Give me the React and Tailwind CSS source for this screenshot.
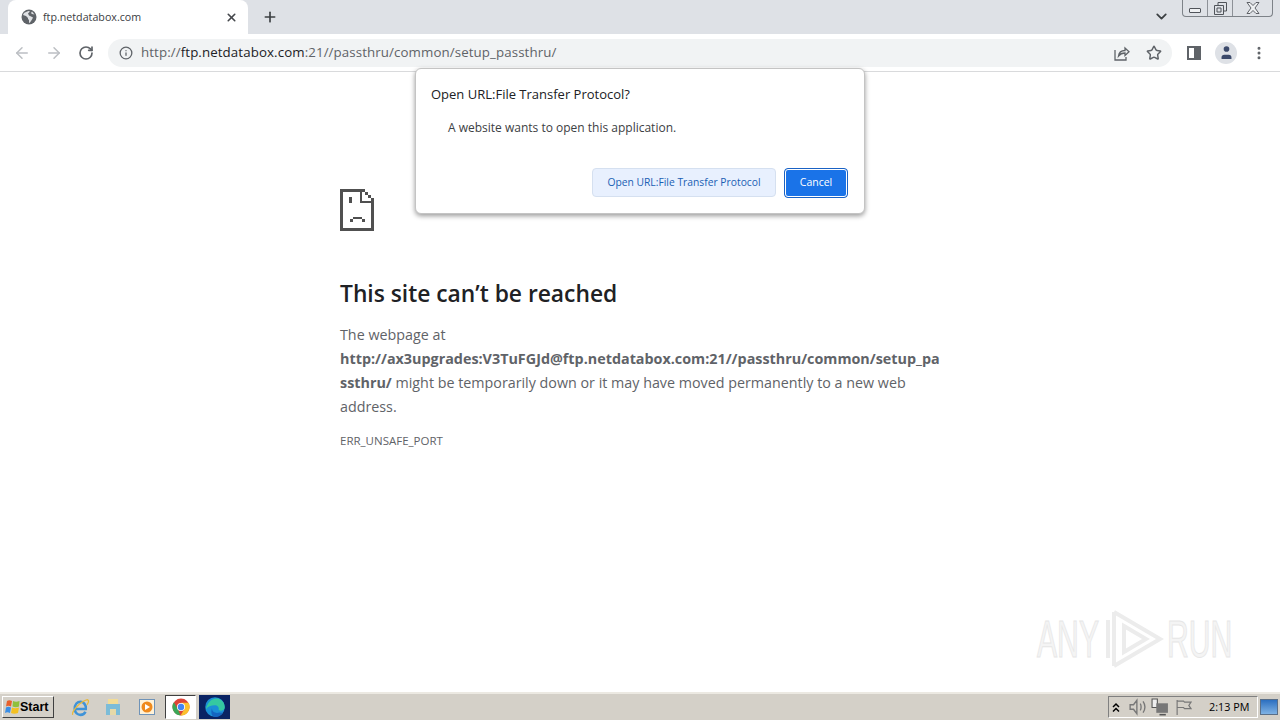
import { ArrowLeft, ArrowRight, RotateCw, Info, X, Plus, ChevronDown, Star, User, EllipsisVertical } from 'lucide-react'

const UI_FONT = "font-['Open_Sans','Noto_Sans',sans-serif]"

function Globe() {
  return (
    <svg width="16" height="16" viewBox="0 0 16 16">
      <circle cx="8" cy="8" r="7.5" fill="#5f6368" />
      <path d="M2 6l3 1 2 2v1l1 1v3l1-.5 2-3 1-2-2-1-2-1-1-2 2-2-1.500-.5L5 3 3 4z" fill="#dfe1e4" />
      <path d="M11 2.500l-1 1.500 1 1 2.500.5z" fill="#dfe1e4" />
    </svg>
  )
}

function SadPage() {
  return (
    <svg width="34" height="42" viewBox="0 0 34 42" shapeRendering="crispEdges" fill="#505050">
      <path d="M0 0h22v3H3v36h28V14h3v28H0z" />
      <path d="M20 0h2v12h12v2H20z" />
      <path d="M22 0h3v3h-3zM25 3h3v3h-3zM28 6h3v3h-3zM31 9h3v3h-3z" />
      <path d="M9 8h3v6H9z" />
      <path d="M13 28h9v2h-9zM10 30h3v3h-3zM22 30h3v3h-3z" />
    </svg>
  )
}

function WinControls() {
  return (
    <div className="flex items-start h-[17px] w-[91px] border border-t-0 border-[#7d8288] rounded-b-[4px] mr-[7px] self-start">
      <div className="w-[25px] h-full border-r border-[#8d9197] flex items-end justify-center pb-[3px]">
        <div className="w-[12px] h-[5px] border border-[#50545a] rounded-[1px] bg-[#eef0f2]" />
      </div>
      <div className="w-[25px] h-full border-r border-[#8d9197] flex items-center justify-center">
        <svg width="13" height="13" viewBox="0 0 13 13" fill="none" stroke="#50545a">
          <path d="M4 3V.5h8.500V9H10M.5 3.500h9v9h-9zM3 6h4v4H3z" />
        </svg>
      </div>
      <div className="flex-1 h-full flex items-center justify-center">
        <svg width="14" height="12" viewBox="0 0 14 12" fill="#eef0f2" stroke="#50545a" strokeWidth="0.9">
          <path d="M1 .5h3L7 3.500 10 .5h3L9 6l4 5.500h-3L7 8.500 4 11.500H1L5 6z" />
        </svg>
      </div>
    </div>
  )
}

function TabStrip() {
  return (
    <div className="h-[34px] bg-[#dee1e6] flex items-start pl-2 shrink-0">
      <div className="w-[240px] h-[34px] bg-white rounded-t-[8px] flex items-center pl-[13px] pr-[10px]">
        <Globe />
        <span className="ml-[6px] flex-1 text-[10.700px] text-[#3c4043] leading-none">ftp.netdatabox.com</span>
        <X size={13} strokeWidth={3} className="text-[#44474b]" />
      </div>
      <div className="ml-[14px] h-[34px] flex items-center">
        <Plus size={16} strokeWidth={2.500} className="text-[#3c4043]" />
      </div>
      <div className="ml-auto flex items-start h-full">
        <ChevronDown size={17} strokeWidth={2.500} className="text-[#3c4043] mt-[8px] mr-[12px]" />
        <WinControls />
      </div>
    </div>
  )
}

function Toolbar() {
  return (
    <div className="h-[38px] bg-white border-b border-[#d9dadc] flex items-center shrink-0">
      <ArrowLeft size={18} strokeWidth={2} className="ml-[13px] text-[#bcbfc3]" />
      <ArrowRight size={18} strokeWidth={2} className="ml-[14px] text-[#bcbfc3]" />
      <RotateCw size={16} strokeWidth={2.500} className="ml-[15px] text-[#5f6368]" />
      <div className="ml-[14px] w-[1064px] h-[28px] rounded-full bg-[#f1f3f4] flex items-center pl-[11px]">
        <Info size={14} strokeWidth={2.200} className="text-[#5f6368]" />
        <span className="ml-[8px] text-[13.300px] leading-none tracking-[0.1px] text-[#5f6368] whitespace-nowrap">
          http://<span className="text-[#202124]">ftp.netdatabox.com</span>:21//passthru/common/setup_passthru/
        </span>
        <svg className="ml-auto" width="16" height="16" viewBox="0 0 16 16" fill="none" stroke="#5f6368" strokeWidth="1.300">
          <path d="M1 5v10h11v-3M4.500 11c.5-4 3-5.500 6.500-5.500V3l4 3.700-4 3.800V8c-3 0-5 1-6.500 3z" />
        </svg>
        <Star size={16} strokeWidth={2.200} className="ml-[16px] mr-[10px] text-[#5f6368]" />
      </div>
      <div className="ml-[15px] w-[14px] h-[14px] border-2 border-[#5f6368] flex justify-end">
        <div className="w-[5px] h-full bg-[#5f6368]" />
      </div>
      <div className="ml-[14px] w-[22px] h-[22px] rounded-full bg-[#dee1e6] overflow-hidden flex items-center justify-center">
        <User size={17} fill="#3c4a6b" strokeWidth={0} />
      </div>
      <EllipsisVertical size={16} strokeWidth={2.500} className="ml-[14px] text-[#5f6368]" />
    </div>
  )
}

function ErrorPage() {
  return (
    <div className="w-[600px] mx-auto pt-[117px] text-[#5f6368]">
      <SadPage />
      <h1 className="mt-[45px] text-[22.800px] leading-[36px] font-semibold text-[#202124]">This site can’t be reached</h1>
      <p className="mt-[11px] text-[14.300px] leading-[24px]">
        The webpage at
        <br />
        <strong className="font-bold text-[14.350px] text-[#5f6368] break-all">http://ax3upgrades:V3TuFGJd@ftp.netdatabox.com:21//passthru/common/setup_passthru/</strong>
        {' '}might be temporarily down or it may have moved permanently to a new web address.
      </p>
      <div className="mt-[12px] text-[11.500px] leading-[20px]">ERR_UNSAFE_PORT</div>
    </div>
  )
}

function Dialog() {
  return (
    <div className="absolute left-[415px] top-[68px] w-[450px] h-[146px] bg-white rounded-[6px] border border-[#c4c4c4] shadow-[0_2px_5px_rgba(0,0,0,0.4)] pt-[16px] pl-[15px] pr-[16px]">
      <div className="text-[13px] leading-[18px] text-[#202124]">Open URL:File Transfer Protocol?</div>
      <div className="mt-[16px] ml-[17px] text-[12px] leading-[18px] text-[#3c4043]">A website wants to open this application.</div>
      <div className="mt-[31px] flex justify-end gap-[8px]">
        <button className="w-[184px] h-[29px] rounded-[4px] border border-[#d5e0f0] bg-[#e8f0fe] text-[10.300px] text-[#1a5fb4]">Open URL:File Transfer Protocol</button>
        <button className="w-[64px] h-[30px] rounded-[4px] bg-[#1a73e8] border border-[#1a62c4] outline outline-1 -outline-offset-2 outline-white text-[10.500px] text-white">Cancel</button>
      </div>
    </div>
  )
}

function Watermark() {
  return (
    <div className="absolute left-[1037px] top-[606px] flex items-center font-['Liberation_Sans',sans-serif] text-[52px] leading-none select-none">
      <span className="w-[68px] scale-x-[0.58] origin-left text-[#f4f4f4] [-webkit-text-stroke:1px_#e6e6e6]">ANY</span>
      <svg width="62" height="66" viewBox="0 0 60 66" fill="none" stroke="#ececec" strokeWidth="4">
        <path d="M8 6v54M8 6l46 27-46 27M18 20l22 13-22 13zM2 14v38" />
      </svg>
      <span className="w-[65px] scale-x-[0.58] origin-left text-[#f4f4f4] [-webkit-text-stroke:1px_#e6e6e6]">RUN</span>
    </div>
  )
}

function Taskbar() {
  return (
    <div className="h-[28px] bg-[#d4d0c8] border-t-2 border-t-[#ece9e2] flex items-center shrink-0 relative">
      <div className="ml-[2px] w-[52px] h-[22px] border border-t-white border-l-white border-r-[#404040] border-b-[#404040] bg-[#d4d0c8] flex items-center pl-[1px]">
        <svg width="17" height="16" viewBox="0 0 17 16">
          <path d="M3 2c1.500-1 3-1 5 0L7 7.500C5 6.500 3.500 6.500 2 7.500z" fill="#e8602c" />
          <path d="M9 2c2 1 4 1 6.500 0L15 7.500c-2 1-4.500 1-6.500 0z" fill="#8fc03c" />
          <path d="M2 8.500c1.500-1 3-1 5 0L6 14c-2-1-3.500-1-5 0z" fill="#3a8ee6" />
          <path d="M8 8.500c2 1 4 1 7 0L14 14c-2.500 1-5 1-7 0z" fill="#f4c020" />
        </svg>
        <span className="-ml-px text-[12.500px] font-bold leading-none text-black font-['Liberation_Sans',sans-serif]">Start</span>
      </div>
      <svg className="ml-[17px]" width="19" height="19" viewBox="0 0 17 18" fill="none">
        <path d="M3 10.500h10.500C14 6 11 3.500 8.500 3.500 5.500 3.500 3 6 3 10.500c0 3.500 3 5.500 5.500 5.500 2 0 3.800-1 4.700-3" stroke="#3f93d8" strokeWidth="2.400" />
        <path d="M1 16C0 12 9 3 15 1.500c2 .5 1 3-.5 5" stroke="#e8b93c" strokeWidth="1.200" />
      </svg>
      <svg className="ml-[15px]" width="16" height="18" viewBox="0 0 16 18">
        <path d="M3 1h10v5H3z" fill="#f2dc96" />
        <path d="M1 6h14v11h-4v-6H5v6H1z" fill="#7cbcd8" />
        <path d="M5 11h6v6H5z" fill="#e6d9a8" />
      </svg>
      <svg className="ml-[18px]" width="16" height="16" viewBox="0 0 16 16">
        <rect x="0.500" y="0.500" width="15" height="15" fill="#fff2d8" stroke="#6f93b8" />
        <circle cx="8" cy="8" r="5.500" fill="#ef8a1d" />
        <path d="M6 5l5 3-5 3z" fill="#fff" />
      </svg>
      <div className="ml-[10px] w-[31px] h-[24px] bg-white border border-t-[#404040] border-l-[#404040] border-r-white border-b-white flex items-center justify-center">
        <svg width="18" height="18" viewBox="0 0 18 18">
          <circle cx="9" cy="9" r="8.500" fill="#de4437" />
          <path d="M1.900 4.300 6 11.500l2.500 6A8.500 8.500 0 0 1 1.900 4.300z" fill="#3aa757" />
          <path d="M9 4.800h7.500a8.500 8.500 0 0 1-8 12.700L12.500 11z" fill="#fbc02d" />
          <circle cx="9" cy="9" r="4" fill="#fff" />
          <circle cx="9" cy="9" r="3.200" fill="#4285f4" />
        </svg>
      </div>
      <div className="ml-[3px] w-[31px] h-[24px] bg-[#0a2363] flex items-center justify-center">
        <svg width="22" height="22" viewBox="0 0 18 18">
          <circle cx="9" cy="9" r="8" fill="#1b8fd6" />
          <path d="M1.500 11C3 4 8 1 12.500 2.500 16 4 17 7 17 9.500c0 2.500-3 3-5 2 .5-2-.5-4-3-4-3.500 0-6 1-7.500 3.500z" fill="#35c9a0" />
          <path d="M6.500 10c0 3 3 4.500 6 3.500l3 .5c-2 3-5 3.500-7 3-2.500-.5-3-4-2-7z" fill="#1565c0" />
        </svg>
      </div>
      <div className="ml-auto flex items-center h-[22px] w-[150px] border border-t-[#808080] border-l-[#808080] border-r-white border-b-white pl-[2px]">
        <svg width="10" height="11" viewBox="0 0 10 11" fill="none" stroke="#000" strokeWidth="1.500">
          <path d="M2 5l3-3 3 3M2 9.500l3-3 3 3" />
        </svg>
        <svg className="ml-[8px]" width="18" height="18" viewBox="0 0 16 16" fill="none" stroke="#777" strokeWidth="1.200">
          <path d="M1 6h3l3-4v12l-3-4H1zM10 5c1 1.500 1 4.500 0 6M12.500 3c2 3 2 7 0 10" />
        </svg>
        <svg className="ml-[4px]" width="18" height="18" viewBox="0 0 17 17">
          <path d="M1 1h5v8H1z" fill="#eee" stroke="#555" />
          <path d="M5 5h11v9H5z" fill="#777" />
          <path d="M8 15h6v1.500H8z" fill="#555" />
        </svg>
        <svg className="ml-[6px]" width="17" height="17" viewBox="0 0 16 16" fill="none" stroke="#777" strokeWidth="1.100">
          <path d="M2 1v14M2 2h6l1 1h6l-2 3 2 3H9L8 8H2" />
        </svg>
        <span className="ml-[17px] text-[10.800px] leading-none text-black font-['Open_Sans',sans-serif] whitespace-nowrap">2:13 PM</span>
      </div>
      <div className="ml-[2px] mr-[2px] w-[18px] h-[16px] bg-[linear-gradient(#2c6fc0,#7fb2e4)] border border-[#5a6f88]" />
    </div>
  )
}

export default function App() {
  return (
    <div className={`relative w-[1280px] h-[720px] overflow-hidden flex flex-col bg-white ${UI_FONT}`}>
      <TabStrip />
      <Toolbar />
      <div className="flex-1">
        <ErrorPage />
      </div>
      <Taskbar />
      <Dialog />
      <Watermark />
    </div>
  )
}
